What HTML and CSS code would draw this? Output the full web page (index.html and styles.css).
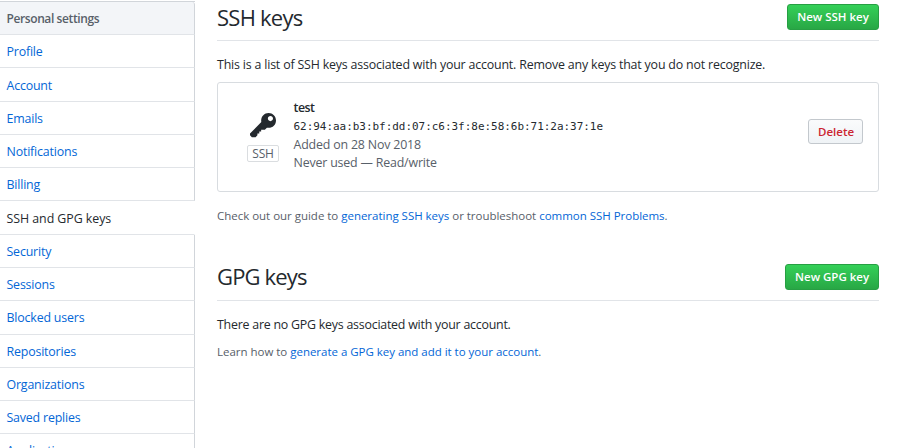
FILE: index.html
```
<!DOCTYPE html>
<html lang="en">
<head>
<meta charset="utf-8">
<title>SSH and GPG keys</title>
<link rel="stylesheet" href="styles.css">
</head>
<body>
<div class="page">
  <nav class="menu">
    <h3 class="menu-heading">Personal settings</h3>
    <a class="menu-item">Profile</a>
    <a class="menu-item">Account</a>
    <a class="menu-item">Emails</a>
    <a class="menu-item">Notifications</a>
    <a class="menu-item">Billing</a>
    <a class="menu-item selected">SSH and GPG keys</a>
    <a class="menu-item">Security</a>
    <a class="menu-item">Sessions</a>
    <a class="menu-item">Blocked users</a>
    <a class="menu-item">Repositories</a>
    <a class="menu-item">Organizations</a>
    <a class="menu-item">Saved replies</a>
    <a class="menu-item">Applications</a>
  </nav>
  <main class="content">
    <header class="subhead">
      <h2 class="title">SSH keys</h2>
      <button class="btn btn-primary btn-ssh">New SSH key</button>
    </header>
    <p class="intro">This is a list of SSH keys associated with your account. Remove any keys that you do not recognize.</p>
    <section class="key-box">
      <div class="key-kind">
        <svg class="key-icon" viewBox="0 0 14 16" width="26" height="30"><path fill-rule="evenodd" d="M12.83 2.17C12.08 1.42 11.14 1.03 10 1c-1.13.03-2.08.42-2.83 1.17S6.04 3.86 6.01 5c0 .3.03.59.09.89L0 12v1l1 1h2l1-1v-1h1v-1h1v-1h2l1.09-1.11c.3.08.59.11.91.11 1.14-.03 2.08-.42 2.83-1.17S13.97 6.14 14 5c-.03-1.14-.42-2.08-1.17-2.83zM11 5.38c-.77 0-1.38-.61-1.38-1.38 0-.77.61-1.38 1.38-1.38.77 0 1.38.61 1.38 1.38 0 .77-.61 1.38-1.38 1.38z"/></svg>
        <span class="badge">SSH</span>
      </div>
      <div class="key-info">
        <strong class="key-name">test</strong>
        <code class="fingerprint">62:94:aa:b3:bf:dd:07:c6:3f:8e:58:6b:71:2a:37:1e</code>
        <span class="meta">Added on 28 Nov 2018</span>
        <span class="meta">Never used — Read/write</span>
      </div>
      <button class="btn btn-danger">Delete</button>
    </section>
    <p class="help help-ssh">Check out our guide to <a>generating SSH keys</a> or troubleshoot <a>common SSH Problems</a>.</p>
    <header class="subhead subhead-gpg">
      <h2 class="title">GPG keys</h2>
      <button class="btn btn-primary">New GPG key</button>
    </header>
    <p class="intro intro-gpg">There are no GPG keys associated with your account.</p>
    <p class="help">Learn how to <a>generate a GPG key and add it to your account</a>.</p>
  </main>
</div>
</body>
</html>
```
FILE: styles.css
```
* { box-sizing: border-box; }
body {
  margin: 0;
  height: 448px;
  overflow: hidden;
  background: #fff;
  color: #24292e;
  font: 12.4px/18px "Open Sans", "Noto Sans", sans-serif;
  letter-spacing: -0.18px;
}
h2, h3, p { margin: 0; }
a { color: #0366d6; }
.page { display: flex; align-items: flex-start; gap: 22px; }
.menu {
  width: 195px;
  margin-top: 0.89px;
  border-top: 1px solid #d1d5da;
}
.menu-heading, .menu-item {
  display: block;
  height: 33.266px;
  padding: 8.15px 6.5px 0;
  border-right: 1px solid #d1d5da;
  border-bottom: 1px solid #e1e4e8;
}
.menu-heading {
  background: #f3f5f8;
  color: #586069;
  font-size: 12px;
  font-weight: 600;
  line-height: 18px;
  letter-spacing: -0.4px;
  border-top-right-radius: 3px;
}
.menu-item.selected {
  color: #24292e;
  font-weight: 500;
  letter-spacing: -0.05px;
  border-right-color: #fff;
}
.content { width: 662px; }
.subhead {
  display: flex;
  align-items: flex-start;
  justify-content: space-between;
  height: 41px;
  padding-top: 4px;
  border-bottom: 1px solid #e1e4e8;
}
.title {
  margin-top: -2px;
  font-size: 22px;
  line-height: 30px;
  font-weight: 370;
  letter-spacing: -0.75px;
}
.subhead-gpg .title { margin-top: -3px; letter-spacing: -0.85px; }
.btn {
  height: 26px;
  padding: 0 9px;
  border: 1px solid #c3c8cd;
  border-radius: 3px;
  font: 600 11.5px/24px "Open Sans", "Noto Sans", sans-serif;
  white-space: nowrap;
}
.btn-primary {
  width: 94px;
  color: #fff;
  border-color: #279f43;
  background: linear-gradient(#34d058, #28a745);
}
.btn-ssh { width: 92px; }
.btn-danger {
  width: 55px;
  height: 25px;
  margin-bottom: 11px;
  color: #cb2431;
  background: linear-gradient(#fafbfc, #eff3f6);
}
.subhead .title { font-weight: 400; }
.intro { margin-top: 15px; white-space: nowrap; }
.intro-gpg { letter-spacing: -0.23px; }
.key-box {
  display: flex;
  align-items: center;
  height: 110px;
  margin-top: 8px;
  padding: 0 15px 0 29px;
  border: 1px solid #d8dce0;
  border-radius: 3px;
}
.key-kind {
  display: flex;
  flex-direction: column;
  align-items: center;
  width: 32px;
  margin-right: 14.5px;
  margin-bottom: 2px;
}
.key-icon { fill: #24292e; }
.badge {
  width: 32px;
  height: 17px;
  margin-top: 4px;
  border: 1px solid #dadde0;
  border-radius: 2px;
  color: #586069;
  font-size: 12px;
  line-height: 15px;
  text-align: center;
}
.key-info { display: flex; flex-direction: column; flex: 1; margin-bottom: 4px; }
.key-name { font-weight: 600; letter-spacing: -0.5px; }
.fingerprint { font: 10.95px/19px "DejaVu Sans Mono", monospace; letter-spacing: 0; }
.meta { color: #586069; }
.help { margin-top: 9px; color: #586069; font-size: 11.5px; letter-spacing: -0.02px; }
.help-ssh { margin-top: 15px; }
.subhead-gpg { margin-top: 35px; }
```
